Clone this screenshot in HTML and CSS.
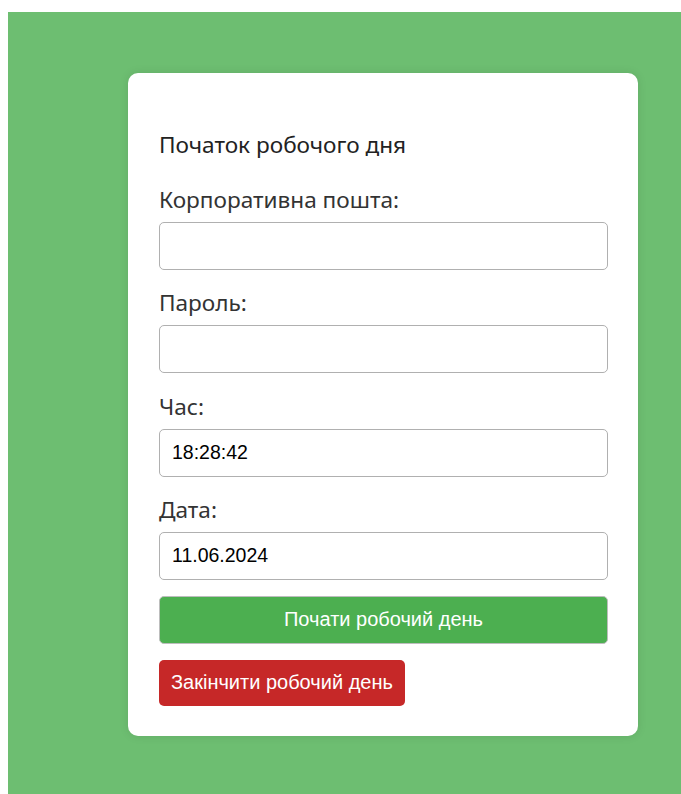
FILE: index.html
```html
<!DOCTYPE html>
<html lang="uk">
<head>
<meta charset="utf-8">
<title>Початок робочого дня</title>
<link rel="stylesheet" href="styles.css">
</head>
<body>
  <main class="backdrop">
    <form class="card">
      <h2 class="card-title">Початок робочого дня</h2>
      <div class="field">
        <label class="field-label" for="email">Корпоративна пошта:</label>
        <input class="field-input" id="email" type="email">
      </div>
      <div class="field">
        <label class="field-label" for="password">Пароль:</label>
        <input class="field-input" id="password" type="password">
      </div>
      <div class="field">
        <label class="field-label" for="time">Час:</label>
        <input class="field-input" id="time" type="text" value="18:28:42">
      </div>
      <div class="field">
        <label class="field-label" for="date">Дата:</label>
        <input class="field-input" id="date" type="text" value="11.06.2024">
      </div>
      <button class="btn btn-start" type="button">Почати робочий день</button>
      <div class="actions">
        <button class="btn btn-end" type="button">Закінчити робочий день</button>
      </div>
    </form>
  </main>
</body>
</html>
```
FILE: styles.css
```css
html, body {
  height: 100%;
}

body {
  margin: 0;
  padding: 12px 0 0 8px;
  box-sizing: border-box;
  overflow: hidden;
  font-family: "Noto Sans", "Open Sans", sans-serif;
}

.backdrop {
  display: flex;
  align-items: flex-start;
  box-sizing: border-box;
  height: 100%;
  background: #6dbe71;
  padding: 61px 0 0 120px;
}

.card {
  width: 510px;
  box-sizing: border-box;
  background: #ffffff;
  border-radius: 10px;
  box-shadow: 0 0 10px rgba(0, 0, 0, 0.1);
  padding: 30px 30px 30px 31px;
  display: flex;
  flex-direction: column;
}

.card-title {
  margin: 28px 0 0;
  font-size: 22.6px;
  font-weight: 400;
  line-height: 28px;
  color: #222;
}

.field {
  display: flex;
  flex-direction: column;
  margin-top: 27px;
}

.field + .field {
  margin-top: 19.3px;
}

.field-label {
  font-size: 22.6px;
  line-height: 28px;
  color: #333;
  margin-bottom: 8px;
}

.field-input {
  height: 48px;
  box-sizing: border-box;
  border: 1px solid #b0b0b0;
  border-radius: 5px;
  padding: 0 12px;
  font-family: "Liberation Sans", Arial, sans-serif;
  font-size: 19.5px;
  color: #000;
  background: #fff;
}

.btn {
  font-family: "Liberation Sans", Arial, sans-serif;
  font-size: 20px;
  color: #fff;
  border-radius: 5px;
  cursor: pointer;
}

.btn-start {
  margin-top: 16px;
  height: 48px;
  width: 100%;
  background: #4caf50;
  border: 1px solid #bdbdbd;
}

.actions {
  display: flex;
  margin-top: 16px;
}

.btn-end {
  height: 46px;
  padding: 0 12px;
  background: #c62828;
  border: none;
}
```
